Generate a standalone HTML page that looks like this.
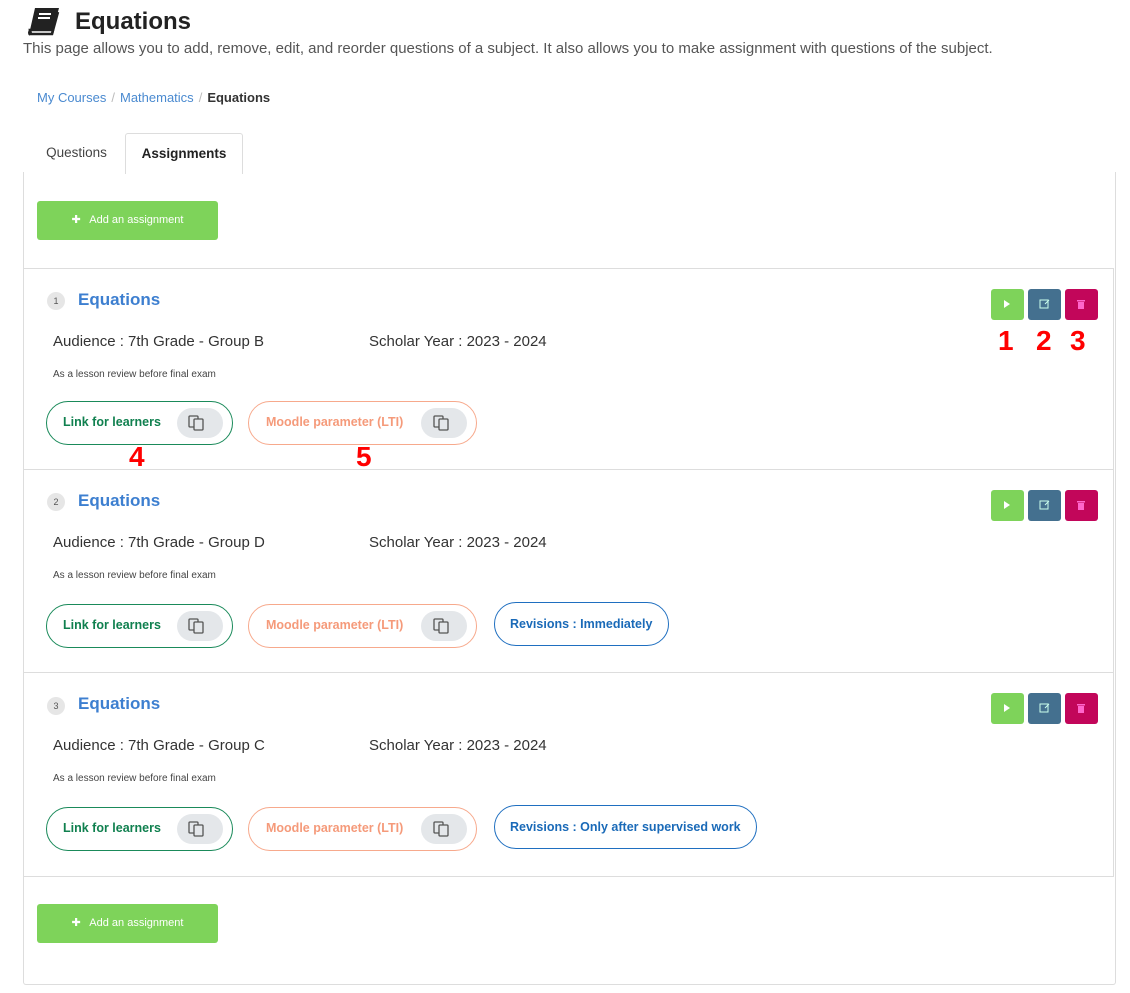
<!DOCTYPE html>
<html><head><style>
body{margin:0;background:#fff;font-family:"Liberation Sans",sans-serif;color:#333;position:relative;width:1130px;height:993px;overflow:hidden}
.a{position:absolute}
h1{position:absolute;left:75px;top:8px;margin:0;font-size:24px;font-weight:bold;color:#222}
.desc{left:23px;top:40px;font-size:15px;color:#555}
.bc{left:37px;top:90px;font-size:13px;color:#4a8ad0}
.bc span.s{color:#bbb;margin:0 5px}
.bc b{color:#333}
.tab{top:133px;height:40px;line-height:40px;font-size:13.5px;text-align:center}
.panel{left:23px;top:172px;width:1093px;height:813px;border:1px solid #ddd;border-top:none;box-sizing:border-box;border-radius:0 0 3px 3px}
.add{left:37px;width:181px;height:39px;background:#7ed35a;border-radius:3px;color:#fff;font-size:11px;line-height:39px;text-align:center}
.card{left:23px;width:1091px;border:1px solid #ddd;box-sizing:border-box}
.num{width:18px;height:18px;border-radius:50%;background:#e6e6e6;font-size:9px;text-align:center;line-height:18px;color:#555}
.t{font-size:17px;font-weight:bold;color:#3d7fd0}
.l{font-size:15px;color:#333}
.sm{font-size:10px;color:#444}
.pill{height:44px;border-radius:22px;box-sizing:border-box;border:1.5px solid;font-size:12.5px;font-weight:bold;line-height:40px}
.cp{position:absolute;top:6px;width:46px;height:30px;border-radius:15px;background:#e4e7ea}
.btn{width:33px;height:31px;border-radius:3px}
.red{color:#f00;font-weight:bold;font-size:28px}
</style></head><body>
<svg class="a" style="left:27px;top:7px" width="34" height="30" viewBox="0 0 34 30"><path d="M8 1h24l-6 22H3z" fill="#222"/><path d="M3 23h23l-1 4H4z" fill="#fff" stroke="#222" stroke-width="2.5"/><path d="M3 23q-2 3 0 5" stroke="#222" stroke-width="2" fill="none"/><rect x="12" y="6" width="12" height="2" fill="#fff"/><rect x="11" y="10" width="12" height="2" fill="#fff"/><path d="M31 5l-6 22" stroke="#222" stroke-width="2.5"/></svg>
<h1>Equations</h1>
<div class="a desc">This page allows you to add, remove, edit, and reorder questions of a subject. It also allows you to make assignment with questions of the subject.</div>
<div class="a bc">My Courses<span class="s">/</span>Mathematics<span class="s">/</span><b>Equations</b></div>
<div class="a tab" style="left:28px;width:97px;color:#444">Questions</div>
<div class="a tab" style="left:125px;width:118px;border:1px solid #ddd;border-bottom:none;border-radius:3px 3px 0 0;background:#fff;font-weight:bold;color:#222;z-index:2;box-sizing:border-box;height:41px">Assignments</div>
<div class="a panel"></div>
<div class="a add" style="top:201px">✚&nbsp;&nbsp; Add an assignment</div>

<div class="a card" style="top:268px;height:202px"></div>
<div class="a card" style="top:469px;height:204px"></div>
<div class="a card" style="top:672px;height:205px"></div>

<div class="a num" style="left:47px;top:292px">1</div><div class="a t" style="left:78px;top:290px">Equations</div>
<div class="a l" style="left:53px;top:333px">Audience : 7th Grade - Group B</div><div class="a l" style="left:369px;top:333px">Scholar Year : 2023 - 2024</div>
<div class="a sm" style="left:53px;top:369px">As a lesson review before final exam</div>
<div class="a pill" style="left:46px;top:401px;width:187px;border-color:#1a8a5a;color:#10804f;padding-left:16px">Link for learners<div class="cp" style="left:130px"></div></div>
<div class="a pill" style="left:248px;top:401px;width:229px;border-color:#f7a98c;color:#f59a7a;padding-left:17px">Moodle parameter (LTI)<div class="cp" style="left:172px"></div></div>
<div class="a red" style="left:129px;top:441px">4</div><div class="a red" style="left:356px;top:441px">5</div>
<div class="a red" style="left:998px;top:325px">1</div><div class="a red" style="left:1036px;top:325px">2</div><div class="a red" style="left:1070px;top:325px">3</div>

<div class="a num" style="left:47px;top:493px">2</div><div class="a t" style="left:78px;top:491px">Equations</div>
<div class="a l" style="left:53px;top:534px">Audience : 7th Grade - Group D</div><div class="a l" style="left:369px;top:534px">Scholar Year : 2023 - 2024</div>
<div class="a sm" style="left:53px;top:570px">As a lesson review before final exam</div>
<div class="a pill" style="left:46px;top:604px;width:187px;border-color:#1a8a5a;color:#10804f;padding-left:16px">Link for learners<div class="cp" style="left:130px"></div></div>
<div class="a pill" style="left:248px;top:604px;width:229px;border-color:#f7a98c;color:#f59a7a;padding-left:17px">Moodle parameter (LTI)<div class="cp" style="left:172px"></div></div>
<div class="a pill" style="left:494px;top:602px;width:175px;border-color:#1f6fc0;color:#1a6ab8;padding-left:15px;line-height:42px">Revisions : Immediately</div>

<div class="a num" style="left:47px;top:697px">3</div><div class="a t" style="left:78px;top:694px">Equations</div>
<div class="a l" style="left:53px;top:737px">Audience : 7th Grade - Group C</div><div class="a l" style="left:369px;top:737px">Scholar Year : 2023 - 2024</div>
<div class="a sm" style="left:53px;top:773px">As a lesson review before final exam</div>
<div class="a pill" style="left:46px;top:807px;width:187px;border-color:#1a8a5a;color:#10804f;padding-left:16px">Link for learners<div class="cp" style="left:130px"></div></div>
<div class="a pill" style="left:248px;top:807px;width:229px;border-color:#f7a98c;color:#f59a7a;padding-left:17px">Moodle parameter (LTI)<div class="cp" style="left:172px"></div></div>
<div class="a pill" style="left:494px;top:805px;width:263px;border-color:#1f6fc0;color:#1a6ab8;padding-left:15px;line-height:42px">Revisions : Only after supervised work</div>

<div class="a btn" style="left:991px;top:289px;background:#7ed35a"></div><div class="a btn" style="left:1028px;top:289px;background:#44708f"></div><div class="a btn" style="left:1065px;top:289px;background:#c2065a"></div>
<div class="a btn" style="left:991px;top:490px;background:#7ed35a"></div><div class="a btn" style="left:1028px;top:490px;background:#44708f"></div><div class="a btn" style="left:1065px;top:490px;background:#c2065a"></div>
<div class="a btn" style="left:991px;top:693px;background:#7ed35a"></div><div class="a btn" style="left:1028px;top:693px;background:#44708f"></div><div class="a btn" style="left:1065px;top:693px;background:#c2065a"></div>
<svg class="a" style="left:0;top:0" width="1130" height="993">
<g id="ic"><path d="M1004 300l6 4-6 4z" fill="#fff"/><rect x="1040" y="300" width="8" height="8" fill="none" stroke="#cfe" stroke-width="1"/><path d="M1045 304l4-4" stroke="#cfe"/><rect x="1078" y="302" width="6" height="7" fill="#f6c"/><rect x="1077" y="300" width="8" height="1.5" fill="#f6c"/></g>
<use href="#ic" y="201"/><use href="#ic" y="404"/>
<g id="cp" fill="none" stroke="#555" stroke-width="1.3"><rect x="189" y="416" width="9" height="11" rx="1"/><rect x="194" y="419" width="9" height="11" rx="1" fill="#e4e7ea"/></g>
<use href="#cp" x="245"/><use href="#cp" y="203"/><use href="#cp" x="245" y="203"/><use href="#cp" y="406"/><use href="#cp" x="245" y="406"/>
</svg>
<div class="a add" style="top:904px">✚&nbsp;&nbsp; Add an assignment</div>
</body></html>
